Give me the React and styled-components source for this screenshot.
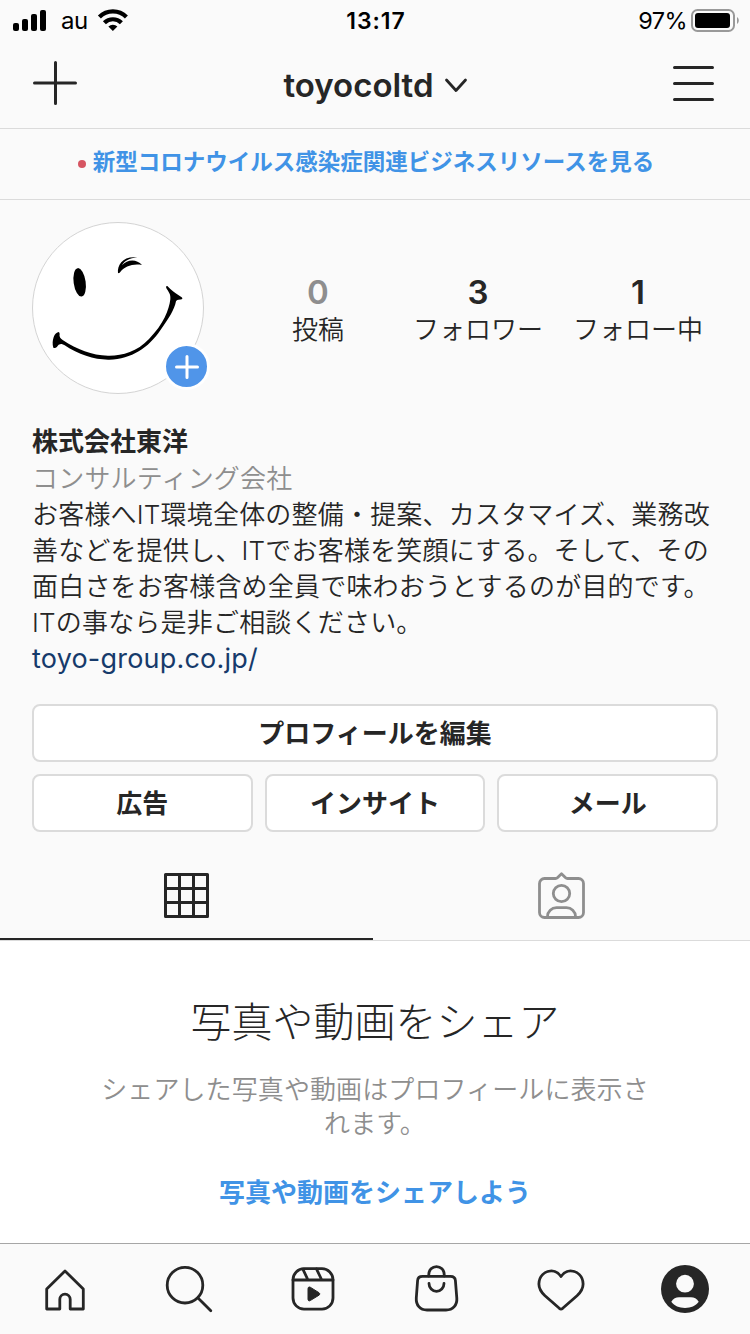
import styled, { createGlobalStyle } from 'styled-components';

const colors = {
  ink: '#262626',
  gray: '#8e8e8e',
  blue: '#4093e6',
  link: '#163a6b',
  border: '#dbdbdb',
  background: '#fafafa',
};

const GlobalStyle = createGlobalStyle`
  * {
    box-sizing: border-box;
  }

  body {
    margin: 0;
    background: ${colors.background};
    color: ${colors.ink};
    font-family: Inter, 'Noto Sans CJK JP', sans-serif;
    font-size: 26px;
  }

  svg {
    display: block;
    flex-shrink: 0;
    overflow: visible;
  }
`;

const Screen = styled.div`
  display: flex;
  flex-direction: column;
  width: 750px;
  height: 1334px;
  overflow: hidden;
`;

const StatusBar = styled.div`
  display: grid;
  grid-template-columns: 1fr auto 1fr;
  align-items: center;
  height: 40px;
  padding: 0 11px 0 13px;
  color: #000;
`;

const StatusGroup = styled.div`
  display: flex;
  align-items: center;
  justify-content: ${props => (props.$end ? 'flex-end' : 'flex-start')};
`;

const Carrier = styled.span`
  margin: 2px 10px 0 15px;
  font-size: 24px;
  line-height: 36px;
  letter-spacing: -0.5px;
`;

const Clock = styled.span`
  padding-top: 1px;
  font-size: 23px;
  font-weight: 600;
  line-height: 36px;
  letter-spacing: 1px;
`;

const Percent = styled.span`
  margin-right: 4px;
  padding-top: 2px;
  font-size: 23.5px;
  line-height: 36px;
  letter-spacing: -0.6px;
`;

const Header = styled.header`
  display: grid;
  grid-template-columns: 1fr auto 1fr;
  align-items: center;
  height: 89px;
  padding: 0 36px 2px 33px;
  border-bottom: 1px solid ${colors.border};

  & > :last-child {
    justify-self: end;
  }
`;

const Account = styled.div`
  display: flex;
  align-items: center;
  gap: 11px;
  padding: 3px 0 0 3px;
`;

const Username = styled.h1`
  margin: 0;
  font-size: 33px;
  font-weight: 600;
  line-height: 40px;
`;

const Notice = styled.div`
  display: flex;
  align-items: center;
  justify-content: center;
  gap: 7px;
  height: 71px;
  padding: 0 18px 4px 0;
  border-bottom: 1px solid ${colors.border};
  color: ${colors.blue};
  font-size: 22.5px;
  font-weight: 600;
  line-height: 32px;
  white-space: nowrap;
`;

const Dot = styled.span`
  width: 8px;
  height: 8px;
  margin-top: 3px;
  border-radius: 50%;
  background: #d65562;
`;

const Profile = styled.section`
  padding: 22px 32px 0;
`;

const Summary = styled.div`
  display: flex;
  justify-content: space-between;
  height: 172px;
`;

const Avatar = styled.div`
  position: relative;
  width: 172px;
  height: 172px;
  border: 1px solid #d4d4d4;
  border-radius: 50%;
  background: #fff;
`;

const AddBadge = styled.span`
  position: absolute;
  right: -7px;
  bottom: 3px;
  display: flex;
  align-items: center;
  justify-content: center;
  width: 47px;
  height: 47px;
  border: 3px solid #fff;
  border-radius: 50%;
  background: #5095e9;
`;

const Stats = styled.div`
  display: grid;
  grid-template-columns: repeat(3, 160px);
  padding-top: 50px;
`;

const Stat = styled.div`
  text-align: center;
  white-space: nowrap;
`;

const StatValue = styled.div`
  color: ${props => (props.$muted ? colors.gray : colors.ink)};
  font-size: 33px;
  font-weight: 600;
  line-height: 40px;
`;

const StatLabel = styled.div`
  font-weight: 350;
  line-height: 36px;
`;

const Bio = styled.div`
  margin-top: 30px;
  font-weight: 350;
  line-height: 36px;
  letter-spacing: 0.2px;
  white-space: nowrap;
`;

const Name = styled.div`
  font-weight: 600;
  letter-spacing: 0;
`;

const Category = styled.div`
  padding-top: 1px;
  color: ${colors.gray};
`;

const Website = styled.div`
  color: ${colors.link};
  font-size: 27px;
  font-weight: 400;
`;

const Actions = styled.div`
  display: grid;
  grid-template-columns: repeat(3, 1fr);
  gap: 12px;
  margin-top: 27px;
`;

const Button = styled.button`
  grid-column: ${props => (props.$wide ? '1 / -1' : 'auto')};
  height: 58px;
  padding: 2px 0 0;
  border: 2px solid ${colors.border};
  border-radius: 8px;
  background: #fff;
  color: ${colors.ink};
  font: inherit;
  font-weight: 600;
  line-height: 36px;
`;

const Tabs = styled.nav`
  display: grid;
  grid-template-columns: 373px 377px;
  height: 91px;
  margin-top: 18px;
  border-bottom: 1px solid ${colors.border};
`;

const Tab = styled.div`
  display: flex;
  align-items: center;
  justify-content: center;
  padding-top: 3px;
  color: ${props => (props.$active ? colors.ink : colors.gray)};
  border-bottom: 2px solid
    ${props => (props.$active ? colors.ink : 'transparent')};
`;

const Empty = styled.main`
  display: flex;
  flex: 1;
  flex-direction: column;
  align-items: center;
  padding-top: 51px;
  background: #fff;
  text-align: center;
`;

const EmptyTitle = styled.h2`
  margin: 0;
  font-size: 41px;
  font-weight: 300;
  line-height: 60px;
`;

const EmptyText = styled.p`
  margin: 21px 0 0;
  color: ${colors.gray};
  font-weight: 350;
  line-height: 34px;
  letter-spacing: 0.1px;
`;

const ShareLink = styled.a`
  margin-top: 34px;
  color: ${colors.blue};
  font-weight: 600;
  line-height: 36px;
`;

const BottomBar = styled.nav`
  display: grid;
  grid-template-columns: repeat(6, 1fr);
  align-items: center;
  justify-items: center;
  height: 91px;
  padding: 0 3px;
  border-top: 1px solid #a6a6a6;
`;

const stats = [
  { label: '投稿', value: 0 },
  { label: 'フォロワー', value: 3 },
  { label: 'フォロー中', value: 1 },
];

const actions = ['広告', 'インサイト', 'メール'];

function Icon({ size = 52, stroke = 2.8, children }) {
  return (
    <svg
      width={size}
      height={size}
      viewBox={`0 0 ${size} ${size}`}
      fill="none"
      stroke="currentColor"
      strokeWidth={stroke}
      strokeLinecap="round"
      strokeLinejoin="round"
    >
      {children}
    </svg>
  );
}

function SignalIcon() {
  return (
    <svg width="33" height="21" viewBox="0 0 33 21">
      <rect x="0" y="13" width="6" height="8" rx="2" />
      <rect x="9" y="9" width="6" height="12" rx="2" />
      <rect x="18" y="4" width="6" height="17" rx="2" />
      <rect x="27" y="0" width="6" height="21" rx="2" />
    </svg>
  );
}

function WifiIcon() {
  return (
    <svg width="30" height="22" viewBox="0 0 30 22">
      <g fill="none" stroke="#000" strokeWidth="4.2">
        <path d="M1.4 8A19 19 0 0 1 28.4 8" />
        <path d="M6.4 13.8A12 12 0 0 1 23.4 13.8" />
      </g>
      <path d="M14.9 22L10.4 17.6A6.5 6.5 0 0 1 19.4 17.6Z" />
    </svg>
  );
}

function BatteryIcon() {
  return (
    <svg width="48" height="23" viewBox="0 0 48 23">
      <rect
        x="1"
        y="1"
        width="42"
        height="21"
        rx="5.5"
        fill="none"
        stroke="#999"
        strokeWidth="2"
      />
      <rect x="4" y="4" width="35" height="15" rx="3" />
      <path d="M46 8c2.4 1.4 2.4 5.600 0 7z" fill="#999" />
    </svg>
  );
}

function Smiley() {
  return (
    <svg width="170" height="170" viewBox="39 39 510 510">
      <ellipse cx="179" cy="217" rx="18" ry="43" transform="rotate(-8 179 217)" />
      <path d="M294 190C291 163 310 137 352 142C328 145 313 153 306 166C322 147 350 146 366 165C340 160 314 168 299 188Z" />
      <path d="M117 366C103 366 94 392 100 413C107 418 112 408 116 404C124 400 127 402 134 406C175 434 225 450 268 449C335 448 386 413 421 361C448 322 463 300 468 274C473 267 481 270 487 267C488 262 482 260 476 256C463 248 455 241 442 228C438 227 437 231 440 236C449 249 452 255 451 268C447 300 431 342 387 387C350 426 305 438 264 437C215 436 172 419 128 390C121 385 117 380 119 371Z" />
    </svg>
  );
}

function App() {
  return (
    <Screen>
      <GlobalStyle />
      <StatusBar>
        <StatusGroup>
          <SignalIcon />
          <Carrier>au</Carrier>
          <WifiIcon />
        </StatusGroup>
        <Clock>13:17</Clock>
        <StatusGroup $end>
          <Percent>97%</Percent>
          <BatteryIcon />
        </StatusGroup>
      </StatusBar>

      <Header>
        <Icon size={44} stroke={3}>
          <path d="M22.500 1.500V42.500M1.500 22H42.500" />
        </Icon>
        <Account>
          <Username>toyocoltd</Username>
          <svg width="22" height="14" viewBox="0 0 22 14">
            <path
              d="M1.500 2L11 12.500L20.500 2"
              fill="none"
              stroke="currentColor"
              strokeWidth="2.800"
              strokeLinecap="round"
              strokeLinejoin="round"
            />
          </svg>
        </Account>
        <Icon size={41} stroke={3}>
          <path d="M1.500 4.500H39.500M1.500 20.500H39.500M1.500 36.500H39.500" />
        </Icon>
      </Header>

      <Notice>
        <Dot />
        新型コロナウイルス感染症関連ビジネスリソースを見る
      </Notice>

      <Profile>
        <Summary>
          <Avatar>
            <Smiley />
            <AddBadge>
              <Icon size={24} stroke={3}>
                <path d="M12 1.500V22.500M1.500 12H22.500" stroke="#fff" />
              </Icon>
            </AddBadge>
          </Avatar>
          <Stats>
            {stats.map(item => (
              <Stat key={item.label}>
                <StatValue $muted={item.value === 0}>{item.value}</StatValue>
                <StatLabel>{item.label}</StatLabel>
              </Stat>
            ))}
          </Stats>
        </Summary>

        <Bio>
          <Name>株式会社東洋</Name>
          <Category>コンサルティング会社</Category>
          <div>
            お客様へIT環境全体の整備・提案、カスタマイズ、業務改
            <br />
            善などを提供し、ITでお客様を笑顔にする。そして、その
            <br />
            面白さをお客様含め全員で味わおうとするのが目的です。
            <br />
            ITの事なら是非ご相談ください。
          </div>
          <Website>toyo-group.co.jp/</Website>
        </Bio>

        <Actions>
          <Button $wide>プロフィールを編集</Button>
          {actions.map(label => (
            <Button key={label}>{label}</Button>
          ))}
        </Actions>
      </Profile>

      <Tabs>
        <Tab $active>
          <Icon size={45} stroke={3}>
            <path d="M1.500 1.500H43.500V43.500H1.500ZM15.500 1.500V43.500M29.500 1.500V43.500M1.500 15.500H43.500M1.500 29.500H43.500" />
          </Icon>
        </Tab>
        <Tab>
          <Icon size={47} stroke={2.8}>
            <path d="M6.500 6.500H17.500C18.500 6.500 19 6.200 19.700 5.500L23.500 1.800L27.300 5.500C28 6.200 28.500 6.500 29.500 6.500H40.500A5 5 0 0 1 45.500 11.500V40.500A5 5 0 0 1 40.500 45.500H6.500A5 5 0 0 1 1.500 40.500V11.500A5 5 0 0 1 6.500 6.500Z" />
            <circle cx="23.500" cy="21.500" r="8.200" />
            <path d="M9.500 45V44.500A9 9 0 0 1 18.500 35.700H28.500A9 9 0 0 1 37.500 44.500V45" />
          </Icon>
        </Tab>
      </Tabs>

      <Empty>
        <EmptyTitle>写真や動画をシェア</EmptyTitle>
        <EmptyText>
          シェアした写真や動画はプロフィールに表示さ
          <br />
          れます。
        </EmptyText>
        <ShareLink>写真や動画をシェアしよう</ShareLink>
      </Empty>

      <BottomBar>
        <Icon>
          <path d="M26 8L44.300 26V46H31.200V36.300A5.200 5.200 0 0 0 20.800 36.300V46H7.700V26Z" />
        </Icon>
        <Icon>
          <circle cx="22" cy="22.200" r="17.800" />
          <path d="M35 35L47.800 47.800" />
        </Icon>
        <Icon>
          <rect x="6" y="5.700" width="40" height="40.400" rx="11" />
          <path d="M6 17H46M15.900 6.200L21 17M29.500 6L34.800 17" />
          <path
            d="M21 25.500C21 24.200 22 23.600 23.200 24.200L32 29.700C33 30.400 33 31.600 32 32.200L23.200 37.600C22 38.300 21 37.700 21 36.400Z"
            fill="currentColor"
            strokeWidth="1"
          />
        </Icon>
        <Icon>
          <path d="M11.500 13.300H39.500C42.600 13.300 44.200 14.700 44.400 17.500L45.800 35C46.400 42 42 47 35 47H16C9 47 4.800 42 5.300 35L6.600 17.500C6.800 14.700 8.400 13.300 11.500 13.300Z" />
          <path d="M17.800 13V11.300A7.700 7.700 0 0 1 33.200 11.300V13M18 20.500A7.500 7.800 0 0 0 33 20.500" />
        </Icon>
        <Icon>
          <path d="M26 13.500C23.500 9.900 20 7.900 16.500 7.900C9.500 7.900 3.900 13.500 3.900 21C3.900 26.500 6.500 29.500 10 32.800L24.300 45.300Q26 46.700 27.700 45.300L42 32.800C45.500 29.500 48.100 26.500 48.100 21C48.100 13.500 42.500 7.900 35.500 7.900C32 7.900 28.500 9.900 26 13.500Z" />
        </Icon>
        <Icon stroke={0}>
          <circle cx="26" cy="26" r="24" fill="currentColor" />
          <circle cx="26" cy="20.700" r="8.900" fill={colors.background} />
          <path
            d="M12.300 38.800C14 35.500 17 34.300 20 34.300H32C35 34.300 38 35.500 39.700 38.800C36.500 43 32 45 26 45S15.500 43 12.300 38.800Z"
            fill={colors.background}
          />
        </Icon>
      </BottomBar>
    </Screen>
  );
}

export default App;
